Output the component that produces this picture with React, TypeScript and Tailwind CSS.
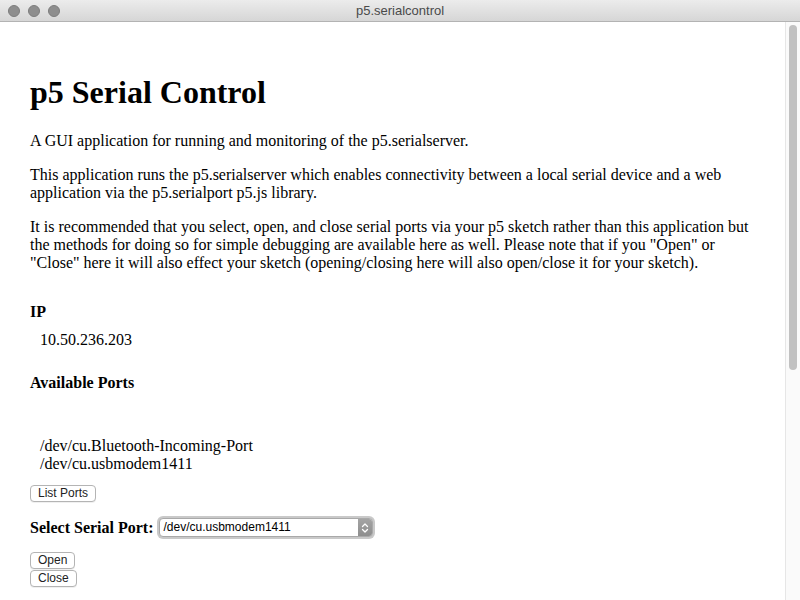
const serif = "font-['Liberation_Serif','Times_New_Roman',serif]";
const sans = "font-['Liberation_Sans',Arial,sans-serif]";

const TitleBar = () => (
  <div className="relative flex h-[22px] shrink-0 items-center border-b border-[#b3b3b3] bg-gradient-to-b from-[#ececec] to-[#d6d6d6]">
    <div className="flex gap-2 pl-2">
      <span className="h-3 w-3 rounded-full border border-[#7d7d7d] bg-[#8e8e8e]" />
      <span className="h-3 w-3 rounded-full border border-[#7d7d7d] bg-[#8e8e8e]" />
      <span className="h-3 w-3 rounded-full border border-[#7d7d7d] bg-[#8e8e8e]" />
    </div>
    <div className={`absolute inset-x-0 text-center text-[13px] leading-[22px] text-[#4a4a4a] ${sans}`}>
      p5.serialcontrol
    </div>
  </div>
);

const MacButton = ({ label, className = "" }: { label: string; className?: string }) => (
  <button
    className={`block h-[17px] rounded-[4px] border border-[#b4b4b4] bg-white px-[7px] text-[12px] leading-[15px] text-[#222] shadow-[0_1px_0_rgba(0,0,0,0.06)] ${sans} ${className}`}
  >
    {label}
  </button>
);

const SelectBox = () => (
  <div className="h-[23px] w-[218px] rounded-[6px] bg-[#c9c9c9] p-[2px]">
    <div className="flex h-full items-stretch overflow-hidden rounded-[4px] border border-[#a9a9a9] bg-white">
      <span className={`flex-1 pl-[4px] text-[12px] leading-[17px] text-black ${sans}`}>/dev/cu.usbmodem1411</span>
      <span className="flex w-[14px] items-center justify-center bg-gradient-to-b from-[#a4a4a4] to-[#8e8e8e]">
        <svg width="8" height="12" viewBox="0 0 8 12" fill="none" stroke="white" strokeWidth="1.3" strokeLinecap="round" strokeLinejoin="round">
          <path d="M1.5 4.5 L4 2 L6.5 4.5" />
          <path d="M1.5 7.5 L4 10 L6.5 7.5" />
        </svg>
      </span>
    </div>
  </div>
);

const Scrollbar = () => (
  <div className="w-[15px] shrink-0 border-l border-[#e6e6e6] bg-[#fafafa] pt-[3px]">
    <div className="ml-[3px] h-[345px] w-[8px] rounded-full bg-[#c1c1c1]" />
  </div>
);

export default function App() {
  return (
    <div className="flex h-[600px] w-[800px] flex-col overflow-hidden bg-white">
      <TitleBar />
      <div className="flex min-h-0 flex-1">
        <main className={`min-w-0 flex-1 overflow-hidden px-[30px] text-[16px] leading-[18px] text-black ${serif}`}>
          <h1 className="mt-[52px] text-[32px] font-bold leading-[36px]">p5 Serial Control</h1>
          <p className="mt-[22px]">A GUI application for running and monitoring of the p5.serialserver.</p>
          <p className="mt-[16px]">
            This application runs the p5.serialserver which enables connectivity between a local serial device and a web
            application via the p5.serialport p5.js library.
          </p>
          <p className="mt-[16px]">
            It is recommended that you select, open, and close serial ports via your p5 sketch rather than this application but
            the methods for doing so for simple debugging are available here as well. Please note that if you "Open" or
            "Close" here it will also effect your sketch (opening/closing here will also open/close it for your sketch).
          </p>
          <h4 className="mt-[31px] font-bold">IP</h4>
          <div className="mt-[10px] pl-[10px]">10.50.236.203</div>
          <h4 className="mt-[25px] font-bold">Available Ports</h4>
          <ul className="mt-[45px] pl-[10px]">
            <li>/dev/cu.Bluetooth-Incoming-Port</li>
            <li>/dev/cu.usbmodem1411</li>
          </ul>
          <MacButton label="List Ports" className="mt-[12px]" />
          <div className="mt-[14px] flex items-center gap-[3px]">
            <span className="font-bold">Select Serial Port:</span>
            <SelectBox />
          </div>
          <MacButton label="Open" className="mt-[13px]" />
          <MacButton label="Close" className="mt-[1px]" />
        </main>
        <Scrollbar />
      </div>
    </div>
  );
}
